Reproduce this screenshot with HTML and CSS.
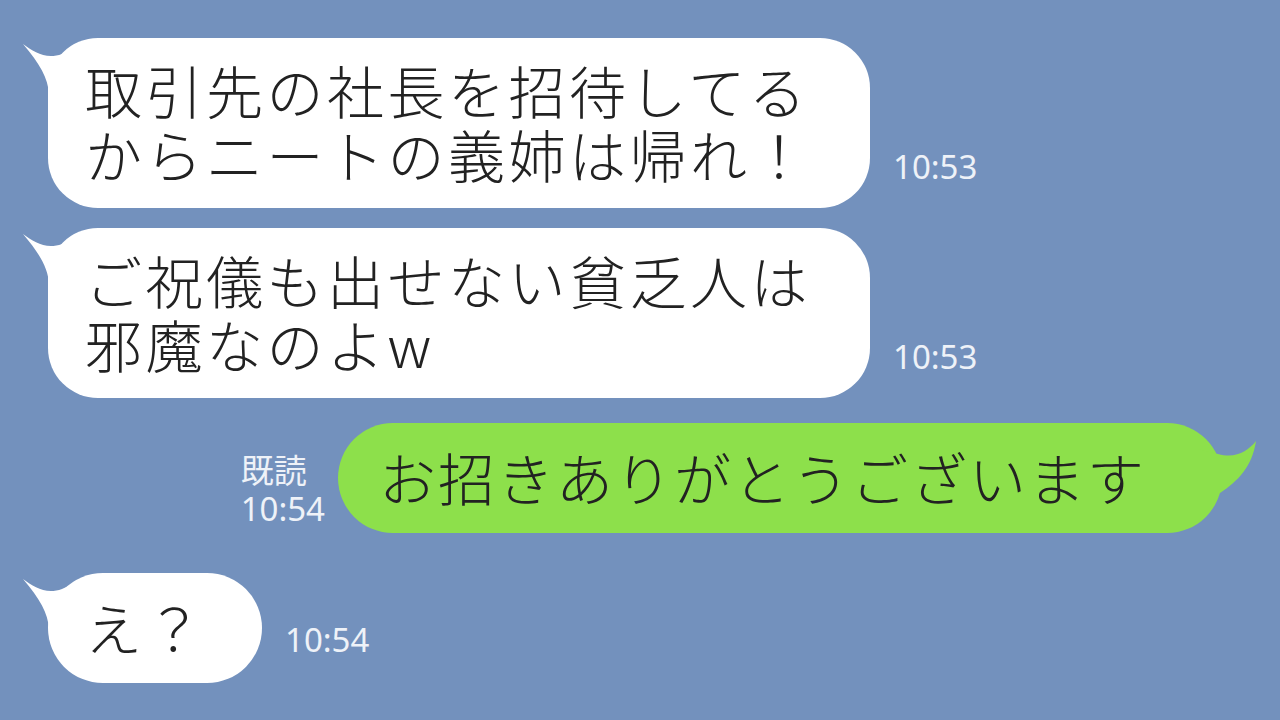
FILE: index.html
```html
<!DOCTYPE html>
<html lang="ja">
<head>
  <meta charset="UTF-8">
  <title>トーク</title>
  <link rel="stylesheet" href="styles.css">
</head>
<body>
  <div class="chat">
    <div class="row in gap-20">
      <div class="bubble white">
        <svg class="tail-left" viewBox="0 0 90 70"><path d="M1 6 C12 14 24 22 40 16 C50 12 60 4 78 1 L90 1 L90 56 L27 56 C26 40 18 26 1 6 Z"/></svg>
        <p>取引先の社長を招待してる<br>からニートの義姉は帰れ！</p>
      </div>
      <div class="meta">10:53</div>
    </div>

    <div class="row in gap-25">
      <div class="bubble white">
        <svg class="tail-left" viewBox="0 0 90 70"><path d="M1 6 C12 14 24 22 40 16 C50 12 60 4 78 1 L90 1 L90 56 L27 56 C26 40 18 26 1 6 Z"/></svg>
        <p>ご祝儀も出せない貧乏人は<br>邪魔なのよw</p>
      </div>
      <div class="meta">10:53</div>
    </div>

    <div class="row out gap-40">
      <div class="meta read">既読<br>10:54</div>
      <div class="bubble green">
        <svg class="tail-right" viewBox="0 0 60 60"><path d="M58 8 C50 18 38 26 20 21 L0 16 L0 60 L22 60 C40 48 54 34 58 8 Z"/></svg>
        <p>お招きありがとうございます</p>
      </div>
    </div>

    <div class="row in">
      <div class="bubble white short">
        <svg class="tail-left" viewBox="0 0 90 70"><path d="M1 6 C12 14 24 22 40 16 C50 12 60 4 78 1 L90 1 L90 56 L27 56 C26 40 18 26 1 6 Z"/></svg>
        <p>え？</p>
      </div>
      <div class="meta last">10:54</div>
    </div>
  </div>
</body>
</html>
```

FILE: styles.css
```css
body {
  margin: 0;
  background: #7391bd;
  width: 1280px;
  height: 720px;
  overflow: hidden;
}

.chat {
  display: flex;
  flex-direction: column;
  padding: 38px 48px 0 48px;
}

.row {
  display: flex;
  align-items: flex-end;
  gap: 23px;
}

.row.out {
  justify-content: flex-end;
  margin-right: 10px;
  gap: 13px;
}

.gap-20 { margin-bottom: 20px; }
.gap-25 { margin-bottom: 25px; }
.gap-40 { margin-bottom: 40px; }

.bubble {
  position: relative;
  color: #222;
  font-family: 'Noto Sans CJK JP', sans-serif;
  font-weight: 300;
  font-size: 57px;
  line-height: 64px;
  letter-spacing: 2px;
}

.bubble p {
  position: relative;
  margin: 0;
  white-space: nowrap;
}

.white {
  background: #fff;
  border-radius: 50px;
  letter-spacing: 3.5px;
  padding: 19px 59px 23px 37px;
}

.white.short {
  border-radius: 55px;
  padding: 21px 56px 25px 37px;
}

.green {
  background: #8de04b;
  border-radius: 55px;
  padding: 21px 76px 25px 41px;
}

.tail-left {
  position: absolute;
  left: -26px;
  top: 0;
  width: 90px;
  height: 70px;
  fill: #fff;
}

.tail-right {
  position: absolute;
  right: -36px;
  top: 10px;
  width: 60px;
  height: 60px;
  fill: #8de04b;
}

.meta {
  color: #eef2f8;
  font-family: 'Noto Sans', 'Noto Sans CJK JP', sans-serif;
  font-size: 33px;
  line-height: 38px;
  padding-bottom: 22px;
}

.meta.read {
  padding-bottom: 5px;
}

.meta.last {
  padding-bottom: 24px;
}
```
